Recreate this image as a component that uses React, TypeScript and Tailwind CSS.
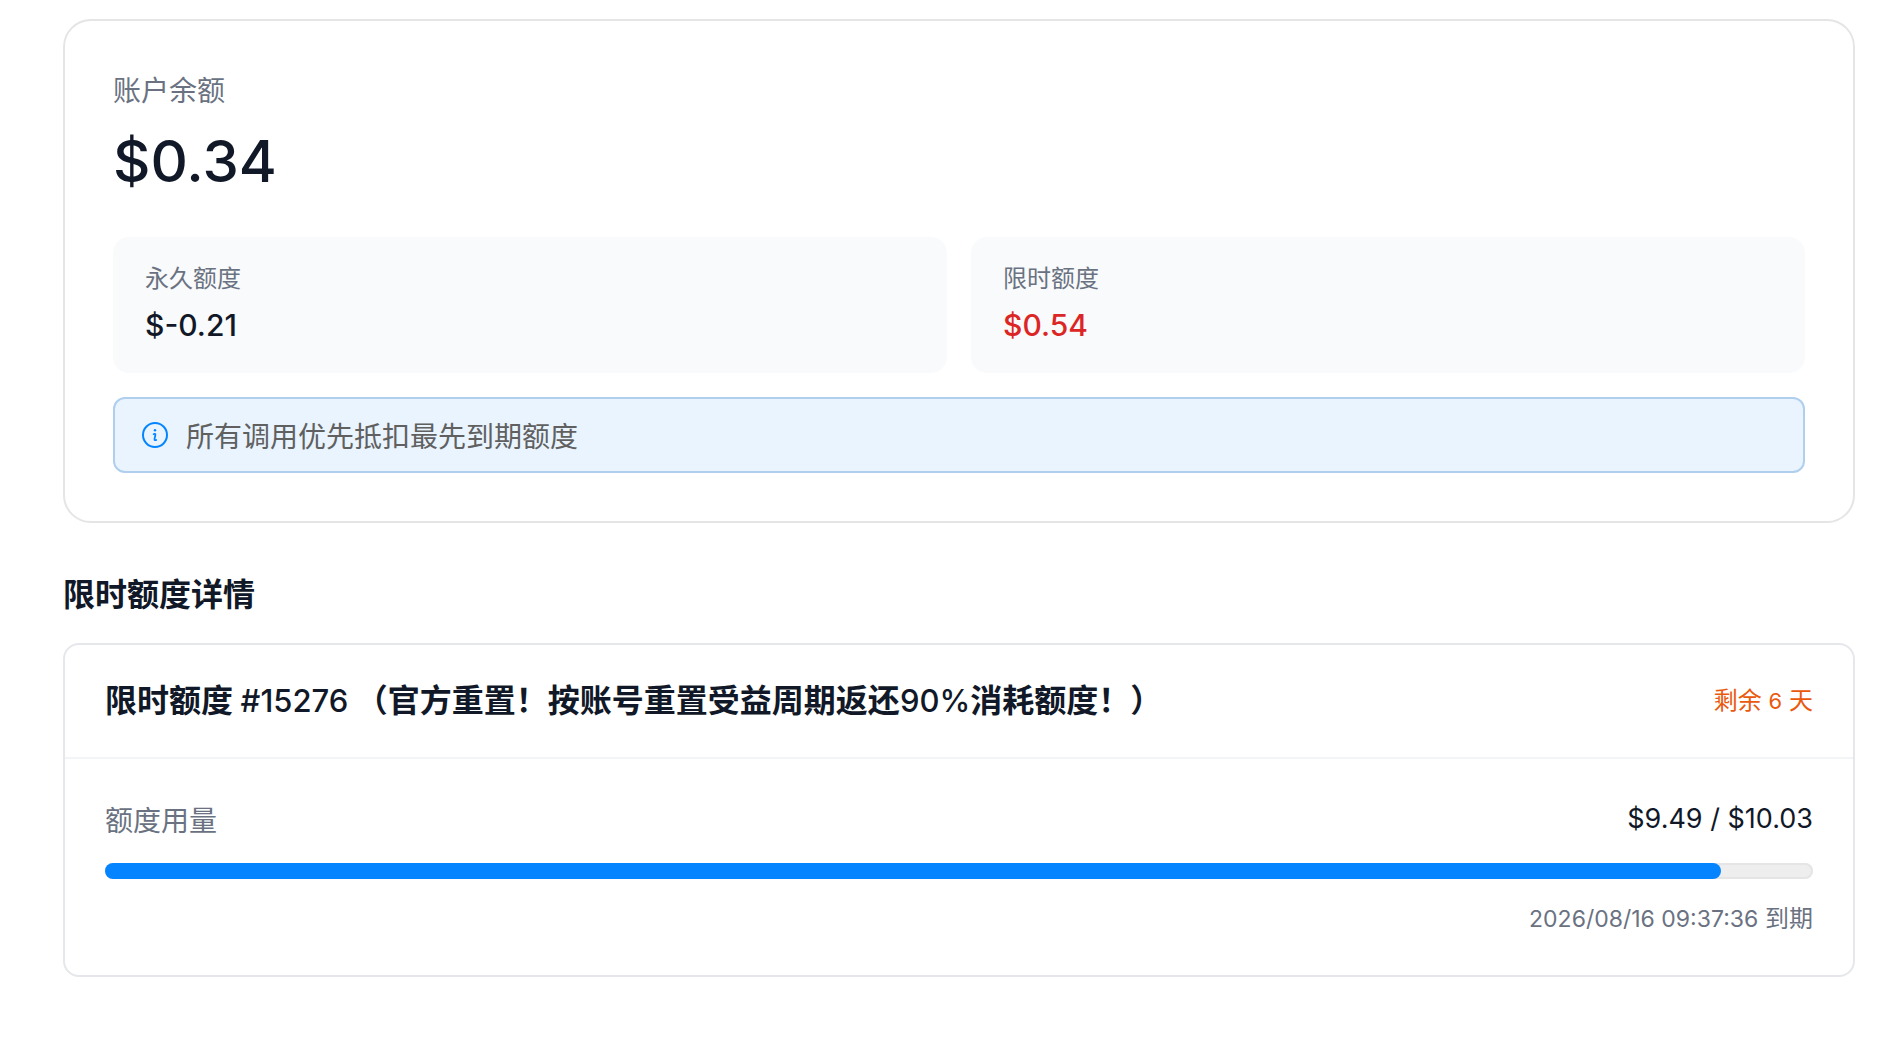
import type { ReactNode } from 'react';

const used = 9.49;
const total = 10.03;

// 숫자/기호 텍스트
function Num({ className, children }: { className: string; children: ReactNode }) {
    return <span className={className}>{children}</span>;
}

function InfoIcon() {
    return (
        <svg
            className="w-[26px] h-[26px] shrink-0 text-[#0485ff]"
            viewBox="0 0 26 26"
            fill="none"
            stroke="currentColor"
            aria-hidden="true"
        >
            <circle cx="13" cy="13" r="12" strokeWidth="2" />
            <circle cx="13" cy="8.2" r="1.2" fill="currentColor" stroke="none" />
            <path
                d="M11.7 12.1c.8-.6 1.9-.2 1.7.8l-.9 4.2c-.2 1 .8 1.4 1.7.8"
                strokeWidth="1.8"
                strokeLinecap="round"
            />
        </svg>
    );
}

function QuotaBox({ label, value, color }: { label: string; value: string; color: string }) {
    return (
        <div className="bg-gray-50 rounded-2xl px-8 py-6">
            <p className="font-['Noto_Sans_CJK_SC',sans-serif] text-2xl leading-8 text-gray-500">{label}</p>
            <p className={`mt-2 text-[30px] leading-[48px] font-medium ${color}`}>{value}</p>
        </div>
    );
}

export default function App() {
    return (
        <div
            lang="zh-CN"
            className="min-h-screen bg-white pt-[19px] pb-8 pl-[63px] pr-[33px] font-['Inter','Noto_Sans_CJK_SC',sans-serif] text-[#111827]"
        >
            {/* 잔액 카드 */}
            <section className="border-2 border-[#e5e5e5] rounded-[28px] p-12">
                <p className="font-['Noto_Sans_CJK_SC',sans-serif] text-[28px] leading-10 text-gray-500">账户余额</p>
                <p className="mt-4 mb-10 text-[58px] leading-[72px] font-medium">$0.34</p>
                <div className="grid grid-cols-2 gap-6">
                    <QuotaBox label="永久额度" value="$-0.21" color="text-[#111827]" />
                    <QuotaBox label="限时额度" value="$0.54" color="text-[#dc2626]" />
                </div>
                <div className="mt-6 flex items-center gap-[18px] px-[27px] py-4 border-2 border-[#b0cfee] bg-[#e9f4ff] rounded-xl">
                    <InfoIcon />
                    <span className="font-['Noto_Sans_CJK_SC',sans-serif] text-[28px] leading-10 text-[#606060]">
                        所有调用优先抵扣最先到期额度
                    </span>
                </div>
            </section>

            {/* 기간 한정 크레딧 */}
            <h2 className="mt-12 mb-6 text-[32px] leading-[48px] font-bold">限时额度详情</h2>
            <section className="border-2 border-[#e5e7eb] rounded-2xl">
                <div className="flex items-center justify-between px-10 py-8 border-b-2 border-gray-100">
                    <h3 className="text-[32px] leading-[48px] font-bold">
                        限时额度 <Num className="text-[31px] font-medium">#15276</Num> （官方重置！按账号重置受益周期返还
                        <Num className="text-[31px] font-medium">90%</Num>消耗额度！）
                    </h3>
                    <span className="text-2xl leading-8 text-[#ea580c]">
                        剩余 <Num className="text-[22px]">6</Num> 天
                    </span>
                </div>
                <div className="p-10">
                    <div className="flex items-center justify-between leading-10">
                        <span className="font-['Noto_Sans_CJK_SC',sans-serif] text-[28px] text-gray-500">额度用量</span>
                        <Num className="text-[27px]">
                            ${used.toFixed(2)} / ${total.toFixed(2)}
                        </Num>
                    </div>
                    <div
                        role="progressbar"
                        aria-label="额度用量"
                        aria-valuenow={used}
                        aria-valuemin={0}
                        aria-valuemax={total}
                        className="mt-6 h-4 rounded-full bg-[#eeeeee] inset-ring-2 inset-ring-[#e5e5e5]"
                    >
                        <div
                            className="h-full rounded-full bg-[#0485ff]"
                            style={{ width: `${(used / total) * 100}%` }}
                        />
                    </div>
                    <p className="mt-6 text-2xl leading-8 text-right text-gray-500">
                        <Num className="text-[23px]">2026/08/16 09:37:36</Num> 到期
                    </p>
                </div>
            </section>
        </div>
    );
}
